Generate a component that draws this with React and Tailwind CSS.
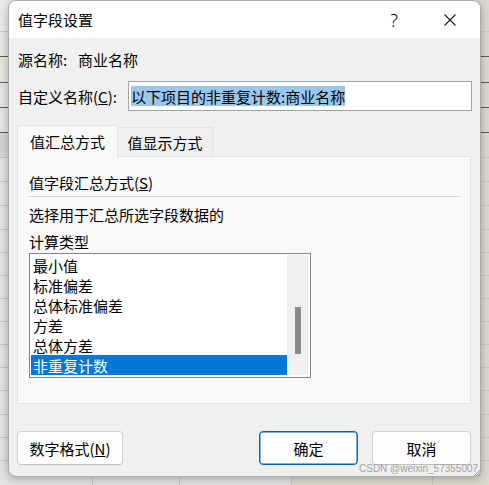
import React from "react";

const bgRows = [
  { h: 32, bg: "bg-[#ebebeb]", b: "border-[#c9c9c9]" },
  { h: 25, bg: "bg-[#e6e6e6]", b: "border-[#5a5a5a]" },
  { h: 26, bg: "bg-[#e9e7da]", b: "border-[#5a5a5a]" },
  { h: 25, bg: "bg-[#e6e6e6]", b: "border-[#5a5a5a]" },
  { h: 25, bg: "bg-[#e6e6e6]", b: "border-[#5a5a5a]" },
  { h: 25, bg: "bg-[#d6d6d6]", b: "border-[#c6c6c6]" },
  { h: 24, bg: "bg-[#e3e3e3]", b: "border-[#c6c6c6]" },
  { h: 24, bg: "bg-[#e3e3e3]", b: "border-[#c6c6c6]" },
  { h: 24, bg: "bg-[#e3e3e3]", b: "border-[#c6c6c6]" },
  { h: 23, bg: "bg-[#e3e3e3]", b: "border-[#c6c6c6]" },
  { h: 23, bg: "bg-[#e3e3e3]", b: "border-[#c6c6c6]" },
  { h: 23, bg: "bg-[#e3e3e3]", b: "border-[#c6c6c6]" },
  { h: 23, bg: "bg-[#e3e3e3]", b: "border-[#c6c6c6]" },
  { h: 23, bg: "bg-[#e3e3e3]", b: "border-[#c6c6c6]" },
  { h: 23, bg: "bg-[#e3e3e3]", b: "border-[#c6c6c6]" },
  { h: 23, bg: "bg-[#e3e3e3]", b: "border-[#c6c6c6]" },
  { h: 24, bg: "bg-[#e3e3e3]", b: "border-[#c6c6c6]" },
  { h: 23, bg: "bg-[#e3e3e3]", b: "border-[#c6c6c6]" },
  { h: 23, bg: "bg-[#e3e3e3]", b: "border-[#c6c6c6]" },
  { h: 30, bg: "bg-[#e3e3e3]", b: "border-[#c6c6c6]" },
];

const items = ["最小值", "标准偏差", "总体标准偏差", "方差", "总体方差", "非重复计数"];

export default function App() {
  return (
    <div className="relative w-[489px] h-[485px] overflow-hidden bg-[#e3e3e3] [font-family:'Noto_Sans_CJK_SC','Noto_Sans',sans-serif]">
      {/* spreadsheet behind */}
      <div className="flex flex-col">
        {bgRows.map((r, i) => (
          <div
            key={i}
            className={`flex border-b ${r.bg} ${r.b}`}
            style={{ height: r.h }}
          >
            <div className="w-[93px] border-r border-[#c6c6c6]" />
            <div className="w-[87px] border-r border-[#c6c6c6]" />
            <div className="w-[112px] border-r border-[#c6c6c6]" />
            <div className="w-[141px] border-r border-[#c6c6c6] bg-[#dcdad0]" />
            <div className="flex-1 bg-[#dcdad0]" />
          </div>
        ))}
      </div>

      {/* dialog window */}
      <div className="absolute left-[8px] top-0 w-[473px] h-[477px] rounded-[8px] border border-[#ababab] bg-[#f0f0f0] overflow-hidden shadow-[0_2px_10px_rgba(0,0,0,0.28)] flex flex-col text-[15px] text-black leading-none">
        {/* title bar */}
        <div className="h-[37px] shrink-0 bg-white flex items-center pl-[9px]">
          <span>值字段设置</span>
          <div className="ml-auto flex items-center gap-[46px] pr-[24px]">
            <span className="[font-family:'Noto_Sans',sans-serif] text-[18px] font-light">?</span>
            <svg width="12" height="12" viewBox="0 0 12 12">
              <path d="M0.5 0.5 L11.5 11.5 M11.5 0.5 L0.5 11.5" stroke="#1a1a1a" strokeWidth="1.1" fill="none" />
            </svg>
          </div>
        </div>

        {/* source name */}
        <div className="mt-[9px] h-[24px] flex items-center pl-[9px]">
          <span className="w-[60px]">源名称:</span>
          <span>商业名称</span>
        </div>

        {/* custom name */}
        <div className="mt-[10px] h-[30px] flex items-center pl-[9px] pr-[8px]">
          <span className="w-[110px]">
            自定义名称(<u>C</u>):
          </span>
          <div className="w-[344px] h-[30px] border border-[#a3a3a3] bg-white flex items-center pl-[2px]">
            <span className="bg-[#99c7ee] h-[20px] flex items-center">以下项目的非重复计数:商业名称</span>
          </div>
        </div>

        {/* tabs */}
        <div className="mt-[14px] h-[31px] flex items-end pl-[8px]">
          <div className="relative z-10 w-[101px] h-[32px] -mb-px border border-b-0 border-[#e3e3e3] bg-[#f9f9f9] flex items-center justify-center">
            值汇总方式
          </div>
          <div className="w-[95px] h-[29px] border-t border-r border-[#e3e3e3] bg-[#f0f0f0] flex items-center justify-center">
            值显示方式
          </div>
        </div>

        {/* panel */}
        <div className="ml-[8px] w-[454px] h-[248px] border border-[#e3e3e3] bg-[#f9f9f9] pt-[13px] px-[11px] flex flex-col">
          <div className="h-[24px] flex items-center">
            值字段汇总方式(<u>S</u>)
          </div>
          <div className="mt-[2px] w-[432px] h-px bg-[#dadada]" />
          <div className="mt-[5px] h-[24px] flex items-center">选择用于汇总所选字段数据的</div>
          <div className="mt-[3px] h-[24px] flex items-center">计算类型</div>

          {/* listbox */}
          <div className="w-[282px] h-[125px] border border-[#868686] bg-white p-[1px] flex">
            <div className="w-[256px] flex flex-col">
              {items.map((t, i) => (
                <div
                  key={t}
                  className={`h-[20px] flex items-center pl-[2px] ${
                    i === items.length - 1 ? "bg-[#0078d7] text-white" : ""
                  }`}
                >
                  {t}
                </div>
              ))}
            </div>
            <div className="w-[22px] h-[120px] bg-[#f0f0f0] pt-[52px] pl-[8px]">
              <div className="w-[6px] h-[47px] bg-[#8a8a8a]" />
            </div>
          </div>
        </div>

        {/* buttons */}
        <div className="mt-[27px] flex items-center pl-[8px] pr-[9px]">
          <button className="w-[106px] h-[34px] rounded-[4px] border border-[#d0d0d0] border-b-[#c2c2c2] bg-[#fdfdfd] flex items-center justify-center">
            数字格式(<u>N</u>)
          </button>
          <button className="ml-auto w-[99px] h-[34px] rounded-[4px] border border-[#0067c0] bg-[#fdfdfd] flex items-center justify-center shadow-[inset_0_0_0_0.5px_#0067c0]">
            确定
          </button>
          <button className="ml-[14px] w-[99px] h-[34px] rounded-[4px] border border-[#d0d0d0] border-b-[#c2c2c2] bg-[#fdfdfd] flex items-center justify-center">
            取消
          </button>
        </div>
      </div>

      {/* watermark */}
      <div className="absolute left-[359px] top-[464px] whitespace-nowrap text-[10px] leading-none text-[#a0a0a0] [font-family:'Liberation_Sans',Arial,sans-serif]">
        CSDN @weixin_57355007
      </div>

      {/* resize grip */}
      <svg className="absolute left-[472px] top-[467px]" width="10" height="10" viewBox="0 0 10 10">
        <path d="M9 2 L2 9 M9 6 L6 9" stroke="#9a9a9a" strokeWidth="1" fill="none" />
      </svg>
    </div>
  );
}
